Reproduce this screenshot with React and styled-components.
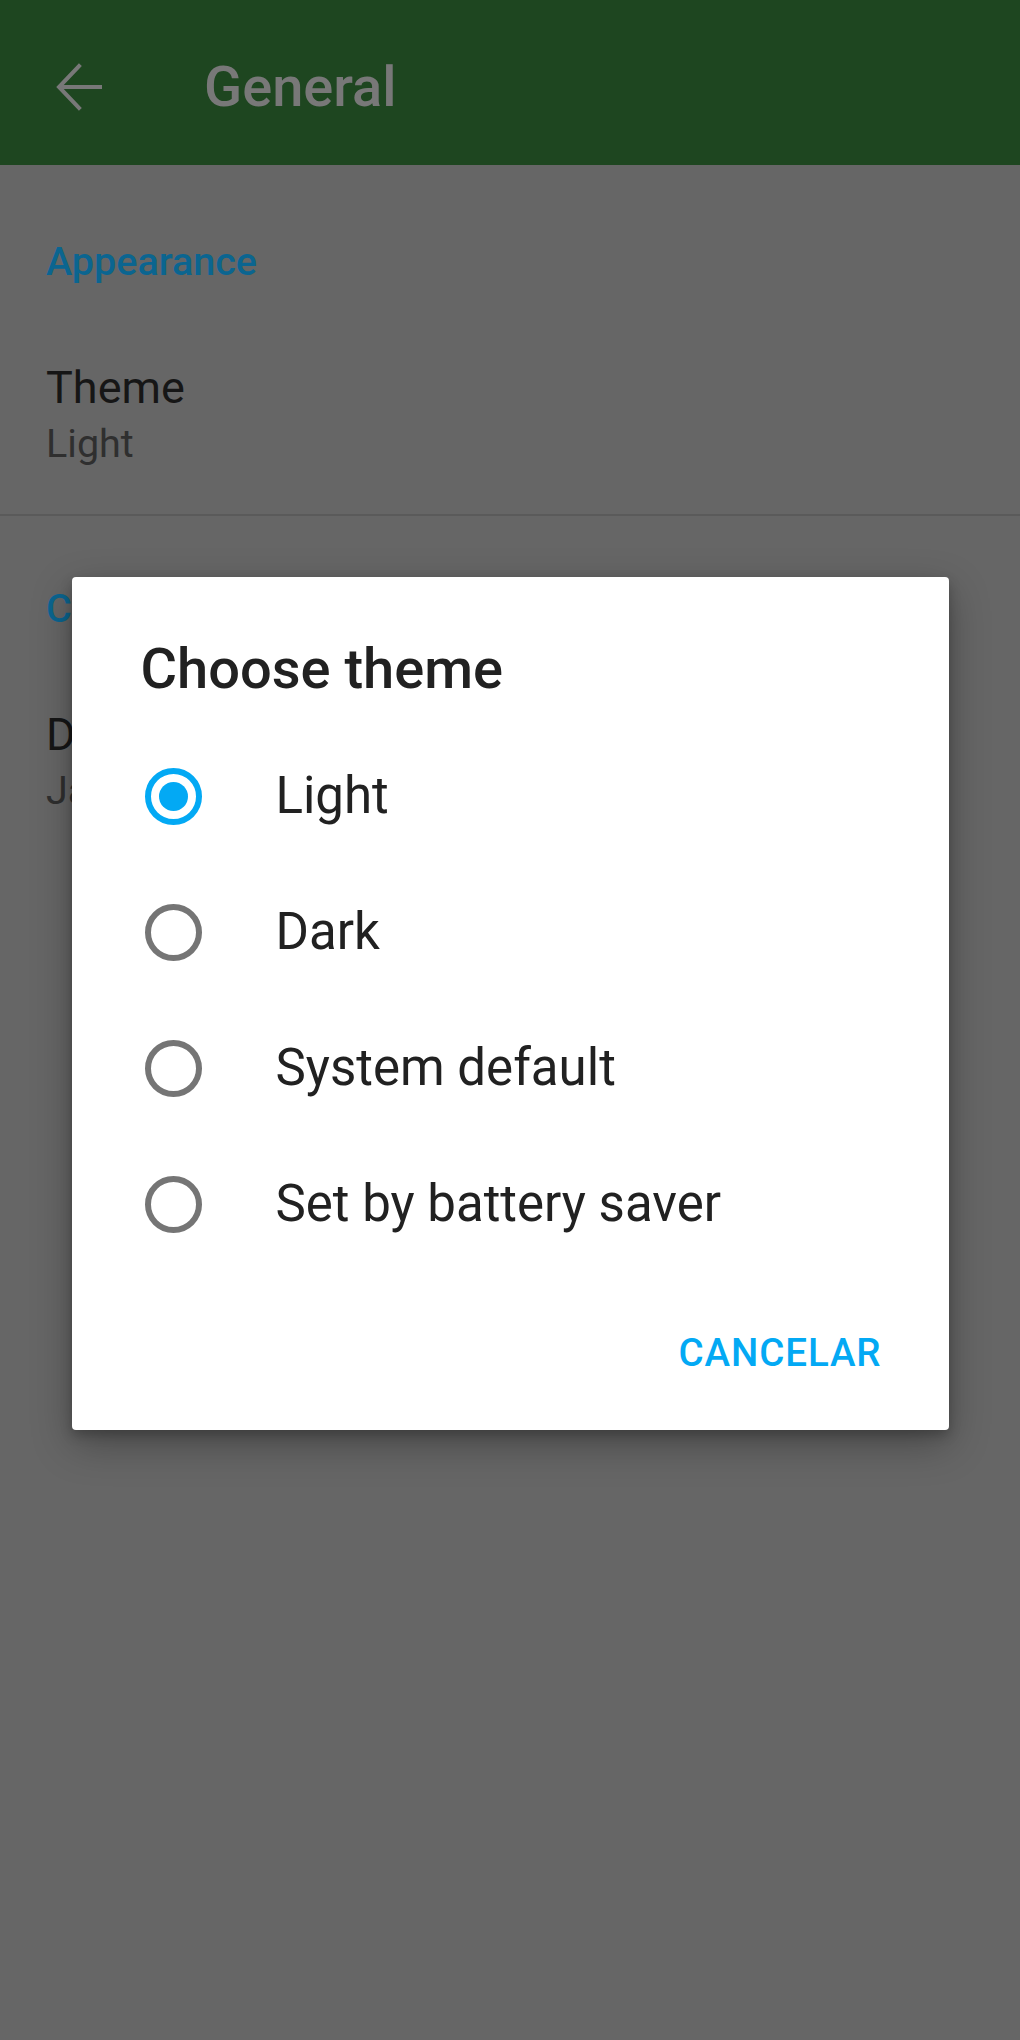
import styled, { createGlobalStyle } from 'styled-components';

const GlobalStyle = createGlobalStyle`
  html, body {
    margin: 0;
    padding: 0;
    background: #666666;
  }
  body {
    font-family: Roboto, "Noto Sans", "Liberation Sans", sans-serif;
  }
`;

const Screen = styled.div`
  position: relative;
  width: 1020px;
  min-height: 2040px;
  background: #666666;
  overflow: hidden;
`;

const TopBar = styled.header`
  height: 165px;
  box-sizing: border-box;
  padding: 8px 0 0 56px;
  display: flex;
  align-items: center;
  gap: 102px;
  background: #1e4620;
`;

const BackButton = styled.svg`
  width: 46px;
  height: 48px;
  flex-shrink: 0;
`;

const BarTitle = styled.h1`
  margin: 0;
  font-size: 56px;
  font-weight: 500;
  line-height: 66px;
  color: #787878;
`;

const Section = styled.section`
  padding: ${props => props.$top}px 0 44px 46px;
  border-bottom: ${props => (props.$divider ? '2px solid #5a5a5a' : 'none')};
`;

const Category = styled.div`
  font-size: 39.5px;
  font-weight: 500;
  line-height: 52px;
  color: #0b6590;
  margin-bottom: 70px;
`;

const PrefTitle = styled.div`
  font-size: 45px;
  line-height: 60px;
  color: #161616;
`;

const PrefSummary = styled.div`
  font-size: 39.5px;
  line-height: 52px;
  color: #2f2f2f;
`;

const Scrim = styled.div`
  position: absolute;
  inset: 0;
  display: flex;
  justify-content: center;
  align-items: flex-start;
  padding-top: 577px;
`;

const Dialog = styled.div`
  width: 877px;
  box-sizing: border-box;
  padding: 56px 0 27px;
  background: #ffffff;
  border-radius: 4px;
  box-shadow: 0 14px 40px rgba(0, 0, 0, 0.3), 0 5px 12px rgba(0, 0, 0, 0.22);
`;

const DialogTitle = styled.h2`
  margin: 0;
  padding: 0 69px;
  font-size: 56px;
  font-weight: 500;
  line-height: 72px;
  color: #212121;
`;

const Options = styled.div`
  margin-top: 23px;
  display: flex;
  flex-direction: column;
`;

const Option = styled.label`
  height: 136px;
  display: flex;
  align-items: center;
  gap: 74px;
  padding-left: 73px;
`;

const Radio = styled.span`
  width: 57px;
  height: 57px;
  box-sizing: border-box;
  border-radius: 50%;
  border: 6px solid ${props => (props.$checked ? '#03a9f4' : '#757575')};
  display: flex;
  align-items: center;
  justify-content: center;
  flex-shrink: 0;

  &::after {
    content: '';
    display: ${props => (props.$checked ? 'block' : 'none')};
    width: 29px;
    height: 29px;
    border-radius: 50%;
    background: #03a9f4;
  }
`;

const OptionLabel = styled.span`
  font-size: 51px;
  line-height: 60px;
  color: #212121;
`;

const Actions = styled.div`
  margin-top: 29px;
  display: flex;
  justify-content: flex-end;
  padding-right: 67px;
`;

const TextButton = styled.button`
  height: 102px;
  padding: 0;
  border: none;
  background: none;
  font-family: inherit;
  font-size: 38.5px;
  font-weight: 500;
  letter-spacing: 0.9px;
  text-transform: uppercase;
  color: #03a9f4;
`;

const themes = ['Light', 'Dark', 'System default', 'Set by battery saver'];

const App = () => {
  const selected = 'Light';

  return (
    <Screen>
      <GlobalStyle />
      <TopBar>
        <BackButton viewBox="0 0 46 48" fill="none" stroke="#787878" strokeWidth="4" strokeLinecap="square">
          <path d="M44 24H4" />
          <path d="M23 3L3 24l20 21" />
        </BackButton>
        <BarTitle>General</BarTitle>
      </TopBar>

      <Section $top={71} $divider>
        <Category>Appearance</Category>
        <PrefTitle>Theme</PrefTitle>
        <PrefSummary>Light</PrefSummary>
      </Section>

      <Section $top={67}>
        <Category>Calendar</Category>
        <PrefTitle>Date format</PrefTitle>
        <PrefSummary>Jan 31, 2024</PrefSummary>
      </Section>

      <Scrim>
        <Dialog>
          <DialogTitle>Choose theme</DialogTitle>
          <Options>
            {themes.map(name => (
              <Option key={name}>
                <Radio $checked={name === selected} />
                <OptionLabel>{name}</OptionLabel>
              </Option>
            ))}
          </Options>
          <Actions>
            <TextButton>Cancelar</TextButton>
          </Actions>
        </Dialog>
      </Scrim>
    </Screen>
  );
};

export default App;
